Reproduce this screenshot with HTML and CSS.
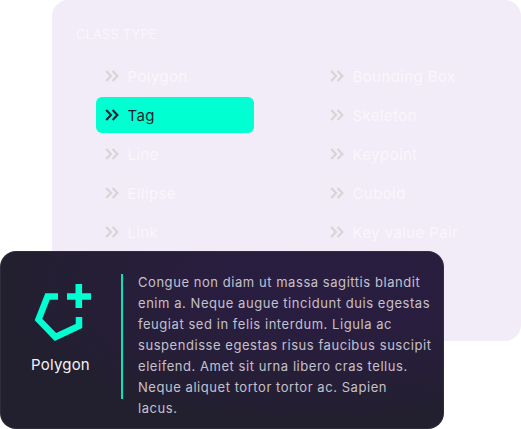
FILE: index.html
```html
<!DOCTYPE html>
<html lang="en">

<head>
  <meta charset="UTF-8">
  <title>Class Types</title>
  <link rel="stylesheet" href="styles.css">
</head>

<body>
  <svg class="icon-defs" width="0" height="0">
    <symbol id="chevrons" viewBox="0 0 14 12">
      <path d="M1.2 1 L6 6 L1.2 11 M7.6 1 L12.4 6 L7.6 11" fill="none" stroke="currentColor" stroke-width="2.1" />
    </symbol>
  </svg>

  <div class="stage">
    <!-- Class type panel -->
    <div class="panel">
      <div class="panel-title">CLASS TYPE</div>
      <ul class="class-list">
        <li class="class-item"><svg class="chevrons"><use href="#chevrons" /></svg>Polygon</li>
        <li class="class-item"><svg class="chevrons"><use href="#chevrons" /></svg>Bounding Box</li>
        <li class="class-item active"><svg class="chevrons"><use href="#chevrons" /></svg>Tag</li>
        <li class="class-item"><svg class="chevrons"><use href="#chevrons" /></svg>Skeleton</li>
        <li class="class-item"><svg class="chevrons"><use href="#chevrons" /></svg>Line</li>
        <li class="class-item"><svg class="chevrons"><use href="#chevrons" /></svg>Keypoint</li>
        <li class="class-item"><svg class="chevrons"><use href="#chevrons" /></svg>Ellipse</li>
        <li class="class-item"><svg class="chevrons"><use href="#chevrons" /></svg>Cuboid</li>
        <li class="class-item"><svg class="chevrons"><use href="#chevrons" /></svg>Link</li>
        <li class="class-item"><svg class="chevrons"><use href="#chevrons" /></svg>Key value Pair</li>
      </ul>
    </div>

    <!-- Detail card over the panel -->
    <div class="detail">
      <div class="detail-side">
        <svg class="detail-icon" width="65" height="65" viewBox="28 280 65 65">
          <path d="M58 296.5 H47.5 L38.5 319.5 L55.5 337 L79 326 V317" fill="none" stroke="#00ffd1" stroke-width="6.5" />
          <path d="M67 296.5 H91 M78.8 284 V308" fill="none" stroke="#00ffd1" stroke-width="6.6" />
        </svg>
        <div class="detail-label">Polygon</div>
      </div>
      <div class="detail-rule"></div>
      <p class="detail-text">Congue non diam ut massa sagittis blandit enim a. Neque augue tincidunt duis egestas feugiat sed in felis interdum. Ligula ac suspendisse egestas risus faucibus suscipit eleifend. Amet sit urna libero cras tellus. Neque aliquet tortor tortor ac. Sapien<br>lacus.</p>
    </div>
  </div>
</body>

</html>
```

FILE: styles.css
```css
body {
  margin: 0;
  background-color: #fff;
  font-family: "Inter", "Liberation Sans", sans-serif;
}

.icon-defs {
  display: block;
}

.stage {
  position: relative;
  width: 521px;
  height: 429px;
  overflow: hidden;
}

.panel {
  box-sizing: border-box;
  height: 341px;
  margin-left: 52px;
  padding: 26px 0 0 24px;
  background-color: #f2ecf8;
  border-radius: 16px;
}

.panel-title {
  font-size: 13px;
  line-height: 16px;
  letter-spacing: 0.1px;
  color: #f9f7fc;
}

.class-list {
  display: grid;
  grid-template-columns: 158px 158px;
  grid-auto-rows: 36px;
  column-gap: 67px;
  row-gap: 3px;
  margin: 16px 0 0 20px;
  padding: 0;
  list-style: none;
}

.class-item {
  display: flex;
  align-items: center;
  gap: 8.5px;
  padding-left: 9px;
  font-size: 15px;
  letter-spacing: 0.4px;
  color: #f9f7fc;
  border-radius: 6px;
}

.class-item.active {
  background-color: #00ffd1;
  color: #1f1f30;
}

.chevrons {
  width: 14px;
  height: 12px;
  color: #d6d5d5;
}

.active .chevrons {
  color: #1f1f30;
}

.detail {
  position: absolute;
  left: 0;
  top: 251px;
  box-sizing: border-box;
  display: flex;
  width: 444px;
  height: 178px;
  padding-top: 23px;
  background: radial-gradient(ellipse 320px 130px at 72% 22%, #2a1d42 0%, #281e3c 50%, #221f2f 100%);
  border-radius: 16px;
  box-shadow: inset 0 0 0 1px rgba(255, 255, 255, 0.06);
}

.detail-side {
  display: flex;
  flex-direction: column;
  align-items: center;
  width: 121px;
  padding-top: 6px;
}

.detail-icon {
  display: block;
}

.detail-label {
  margin-top: 10px;
  font-size: 15px;
  line-height: 20px;
  letter-spacing: 0.2px;
  color: #f4f2f6;
}

.detail-rule {
  flex: none;
  width: 2px;
  height: 125px;
  background-color: #00e6bd;
}

.detail-text {
  width: 296px;
  margin: -2px 0 0 15px;
  font-size: 13px;
  line-height: 21px;
  letter-spacing: 0.55px;
  color: #c5c1cc;
}
```
